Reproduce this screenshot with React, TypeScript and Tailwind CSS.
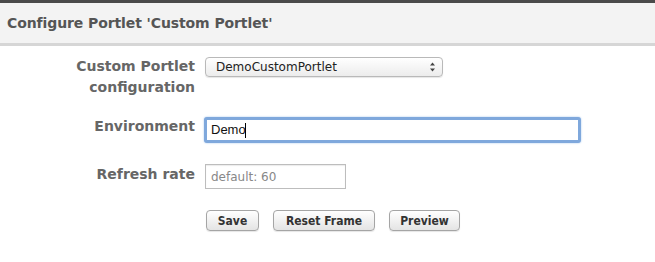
export default function App() {
  return (
    <div className="w-[655px] h-[262px] bg-white overflow-hidden" style={{ fontFamily: '"DejaVu Sans", Verdana, sans-serif' }}>
      {/* Header */}
      <div className="border-t-[3px] border-[#4a4a4a] border-b-[3px] border-b-[#d6d6d6] bg-[#f3f3f3] h-[46px] flex items-center pl-[7px]">
        <h1 className="text-[14px] font-bold text-[#555] tracking-[-0.1px]">Configure Portlet 'Custom Portlet'</h1>
      </div>

      {/* Form */}
      <div className="flex flex-col pt-[10px]">
        <div className="flex">
          <div className="w-[195px] text-right text-[14px] font-bold text-[#666] leading-[21px]">
            Custom Portlet
            <br />
            configuration
          </div>
          <div className="ml-[10px] mt-[1px]">
            <div className="w-[238px] h-[20px] rounded-[4px] border border-[#b9b9b9] bg-gradient-to-b from-white to-[#ececec] flex items-center justify-between pl-[10px] pr-[6px] shadow-[0_1px_1px_rgba(0,0,0,0.1)]">
              <span className="text-[12px] text-[#222]">DemoCustomPortlet</span>
              <svg width="7" height="10" viewBox="0 0 7 10">
                <path d="M3.5 0.5 L6 3.5 L1 3.5 Z" fill="#444" />
                <path d="M3.5 9.5 L6 6.5 L1 6.5 Z" fill="#444" />
              </svg>
            </div>
          </div>
        </div>

        <div className="flex mt-[17px] items-start">
          <div className="w-[195px] text-right text-[14px] font-bold text-[#666] leading-[21px] pt-[1px]">Environment</div>
          <div className="ml-[9px] mt-[2px]">
            <div className="w-[377px] h-[26px] rounded-[3px] border-[3px] border-[#7fa8dc] bg-white flex items-center pl-[4px] shadow-[0_0_2px_#9cc0ec]">
              <span className="text-[13px] text-[#111]" style={{ fontFamily: '"Liberation Sans", Arial, sans-serif' }}>Demo</span>
              <span className="w-[1px] h-[15px] bg-black ml-[-1px]" />
            </div>
          </div>
        </div>

        <div className="flex mt-[21px] items-start">
          <div className="w-[195px] text-right text-[14px] font-bold text-[#666] leading-[21px]">Refresh rate</div>
          <div className="ml-[10px]">
            <div className="w-[141px] h-[25px] border border-[#bdbdbd] bg-white flex items-center pl-[5px] shadow-[inset_0_1px_1px_rgba(0,0,0,0.08)]">
              <span className="text-[12px] text-[#888]">default: 60</span>
            </div>
          </div>
        </div>

        <div className="flex mt-[21px] pl-[206px] gap-[14px]">
          <button className="w-[53px] h-[21px] rounded-[4px] border border-[#a5a5a5] bg-gradient-to-b from-white to-[#e4e4e4] text-[12px] font-bold text-[#333] shadow-[0_1px_1px_rgba(0,0,0,0.1)]" style={{ fontFamily: '"DejaVu Sans Condensed", "DejaVu Sans", sans-serif' }}>
            Save
          </button>
          <button className="w-[102px] h-[21px] rounded-[4px] border border-[#a5a5a5] bg-gradient-to-b from-white to-[#e4e4e4] text-[12px] font-bold text-[#333] shadow-[0_1px_1px_rgba(0,0,0,0.1)]" style={{ fontFamily: '"DejaVu Sans Condensed", "DejaVu Sans", sans-serif' }}>
            Reset Frame
          </button>
          <button className="w-[71px] h-[21px] rounded-[4px] border border-[#a5a5a5] bg-gradient-to-b from-white to-[#e4e4e4] text-[12px] font-bold text-[#333] shadow-[0_1px_1px_rgba(0,0,0,0.1)]" style={{ fontFamily: '"DejaVu Sans Condensed", "DejaVu Sans", sans-serif' }}>
            Preview
          </button>
        </div>
      </div>
    </div>
  );
}
